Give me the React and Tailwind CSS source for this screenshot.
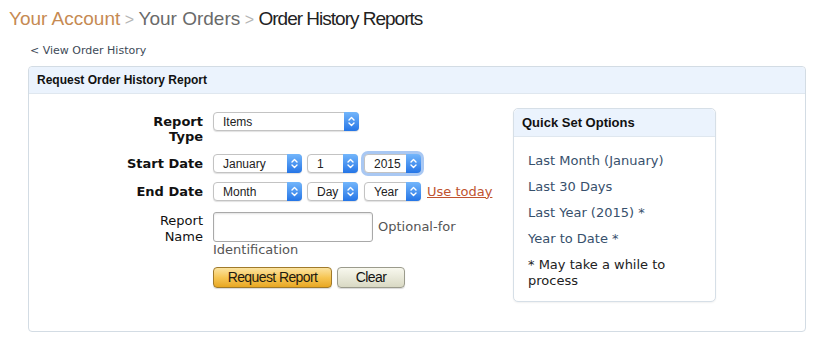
import React from "react";

const verdana = { fontFamily: '"DejaVu Sans", Verdana, sans-serif' };
const arial = { fontFamily: '"Liberation Sans", Arial, sans-serif' };

function Arrow() {
  return (
    <div className="absolute -right-px -top-px -bottom-px flex w-[15px] items-center justify-center rounded-r-[4px] bg-gradient-to-b from-[#73b6fb] to-[#2475e6]">
      <svg width="9" height="13" viewBox="0 0 9 13" fill="none">
        <path d="M2 5 L4.5 2.5 L7 5" stroke="white" strokeWidth="1.4" strokeLinecap="round" strokeLinejoin="round" />
        <path d="M2 8 L4.5 10.5 L7 8" stroke="white" strokeWidth="1.4" strokeLinecap="round" strokeLinejoin="round" />
      </svg>
    </div>
  );
}

function Select({ value, className }) {
  return (
    <div
      className={`relative flex h-[19px] flex-none items-center rounded-[4px] border border-[#c3c3c3] bg-white pl-[9px] text-[12px] text-[#222] shadow-[0_1px_1px_rgba(0,0,0,0.12)] ${className}`}
      style={arial}
    >
      {value}
      <Arrow />
    </div>
  );
}

function Label({ children, bold = true, className = "" }) {
  return (
    <div
      className={`w-[120px] flex-none text-right text-[13px] leading-[15px] text-[#111] ${bold ? "font-bold" : "font-normal"} ${className}`}
      style={verdana}
    >
      {children}
    </div>
  );
}

export default function App() {
  return (
    <div className="min-h-[343px] w-[831px] bg-white">
      <div className="pl-[9px] pt-[8px] text-[19px] leading-[22px]" style={arial}>
        <span className="text-[#c68a52]">Your Account</span>
        <span className="text-[16px] text-[#b5b5b5]"> &gt; </span>
        <span className="text-[#6a6a6a]">Your Orders</span>
        <span className="text-[16px] text-[#b5b5b5]"> &gt; </span>
        <span className="tracking-[-1px] text-[#222]">Order History Reports</span>
      </div>

      <div className="mt-[13px] pl-[30px] text-[11px] leading-[14px] text-[#3d4a57]" style={verdana}>
        &lt; View Order History
      </div>

      <div className="ml-[28px] mt-[8px] w-[778px] rounded-[4px] border border-[#d3dce4] bg-white">
        <div
          className="flex h-[27px] items-center rounded-t-[4px] border-b border-[#dfe7ef] bg-[#ebf3fd] pl-[8px] text-[12px] font-bold text-[#111]"
          style={arial}
        >
          Request Order History Report
        </div>

        <div className="flex pb-[29px]">
          <div className="w-[484px] flex-none pl-[54px] pt-[18px]">
            <div className="flex items-start gap-[10px]">
              <Label className="pt-[2px]">
                Report
                <br />
                Type
              </Label>
              <Select value="Items" className="w-[146px]" />
            </div>

            <div className="mt-[10px] flex items-center gap-[10px]">
              <Label>Start Date</Label>
              <div className="flex items-center gap-[5px]">
                <Select value="January" className="w-[89px]" />
                <Select value="1" className="w-[51px]" />
                <Select
                  value="2015"
                  className="ml-[1px] w-[57px] border-[#6e9fe6] ring-[3px] ring-[#a9c8f3]"
                />
              </div>
            </div>

            <div className="mt-[9px] flex items-center gap-[10px]">
              <Label>End Date</Label>
              <div className="flex items-center gap-[5px]">
                <Select value="Month" className="w-[89px]" />
                <Select value="Day" className="w-[51px]" />
                <Select value="Year" className="ml-[1px] w-[57px]" />
                <a
                  className="ml-[1px] text-[13px] leading-[16px] text-[#c0532f] underline"
                  style={verdana}
                >
                  Use today
                </a>
              </div>
            </div>

            <div className="mt-[11px] flex items-start gap-[10px]">
              <Label bold={false} className="pt-[1px] leading-[16px]">
                Report
                <br />
                Name
              </Label>
              <div>
                <div className="flex items-center gap-[5px]">
                  <div className="h-[30px] w-[160px] rounded-[3px] border border-[#a9a9a9] bg-white shadow-[inset_0_1px_2px_rgba(0,0,0,0.12)]" />
                  <span className="text-[13px] text-[#555]" style={verdana}>
                    Optional-for
                  </span>
                </div>
                <div className="text-[13px] leading-[16px] text-[#555]" style={verdana}>
                  Identification
                </div>
                <div className="mt-[9px] flex gap-[5px]">
                  <button
                    className="flex h-[21px] w-[119px] items-center justify-center rounded-[4px] border border-[#a07a2b] bg-gradient-to-b from-[#fbe39f] via-[#f6c653] to-[#e8a71f] text-[14px] tracking-[-0.6px] text-[#1e1a10] shadow-[0_1px_1px_rgba(0,0,0,0.15)]"
                    style={{ fontFamily: '"Liberation Sans Narrow", "Liberation Sans", Arial, sans-serif' }}
                  >
                    Request Report
                  </button>
                  <button
                    className="flex h-[21px] w-[68px] items-center justify-center rounded-[4px] border border-[#9b9b8c] bg-gradient-to-b from-[#f8f8ee] to-[#d9d9c4] text-[14px] tracking-[-0.6px] text-[#111] shadow-[0_1px_1px_rgba(0,0,0,0.15)]"
                    style={{ fontFamily: '"Liberation Sans Narrow", "Liberation Sans", Arial, sans-serif' }}
                  >
                    Clear
                  </button>
                </div>
              </div>
            </div>
          </div>

          <div className="mt-[14px] w-[203px] flex-none rounded-[5px] border border-[#d6dfe7] bg-white shadow-[0_1px_2px_rgba(0,0,0,0.06)]">
            <div
              className="flex h-[28px] items-center rounded-t-[5px] border-b border-[#dfe7ef] bg-[#ebf3fd] pl-[8px] text-[13px] font-bold text-[#111]"
              style={arial}
            >
              Quick Set Options
            </div>
            <div
              className="flex flex-col gap-[10px] px-[14px] pb-[12px] pt-[16px] text-[13px] leading-[16px] text-[#37506c]"
              style={verdana}
            >
              <a>Last Month (January)</a>
              <a>Last 30 Days</a>
              <a>Last Year (2015) *</a>
              <a>Year to Date *</a>
              <div className="text-[#222]">* May take a while to process</div>
            </div>
          </div>
        </div>
      </div>
    </div>
  );
}
